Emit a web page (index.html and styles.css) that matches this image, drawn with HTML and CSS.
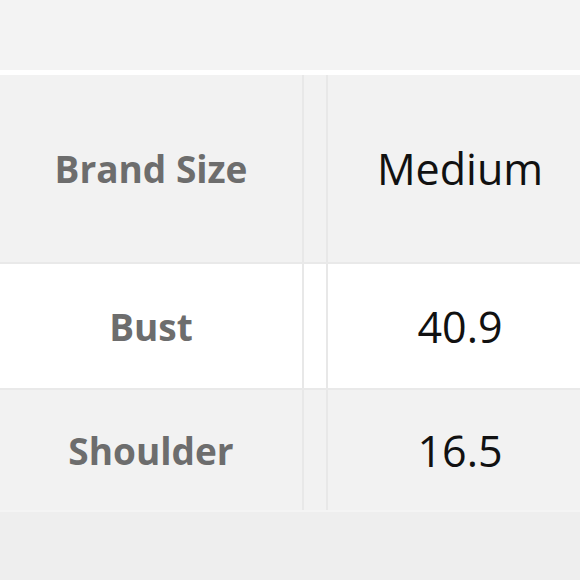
FILE: index.html
```html
<!DOCTYPE html>
<html>
<head>
<meta charset="utf-8">
<link rel="stylesheet" href="styles.css">
</head>
<body>
<div class="page">
  <div class="top"></div>
  <div class="divider"></div>
  <div class="table">
    <div class="row head">
      <div class="cell label">Brand Size</div>
      <div class="cell gap"></div>
      <div class="cell value">Medium</div>
    </div>
    <div class="row alt">
      <div class="cell label">Bust</div>
      <div class="cell gap"></div>
      <div class="cell value">40.9</div>
    </div>
    <div class="row last">
      <div class="cell label">Shoulder</div>
      <div class="cell gap"></div>
      <div class="cell value">16.5</div>
    </div>
  </div>
  <div class="bottom"></div>
</div>
</body>
</html>
```
FILE: styles.css
```css
html, body {
  margin: 0;
  padding: 0;
  background: #f2f2f2;
}
.page {
  width: 580px;
  height: 580px;
  overflow: hidden;
  font-family: "Open Sans", "Noto Sans", sans-serif;
}
.top {
  height: 70px;
  background: #f3f3f3;
}
.divider {
  height: 5px;
  background: #ffffff;
}
.table {
  width: 592px;
}
.row {
  display: grid;
  grid-template-columns: 304px 24px 1fr;
  background: #f2f2f2;
}
.row.head { height: 187px; }
.row.alt {
  height: 126px;
  background: #ffffff;
  border-top: 2px solid #e9e9e9;
  box-sizing: border-box;
}
.row.last {
  height: 122px;
  border-top: 2px solid #e9e9e9;
  box-sizing: border-box;
}
.cell {
  display: flex;
  align-items: center;
  justify-content: center;
}
.label {
  border-right: 2px solid #e8e8e8;
  font-weight: 700;
  font-size: 37px;
  color: #6d6d6d;
}
.gap {
  border-right: 2px solid #e8e8e8;
}
.value {
  font-size: 43px;
  color: #111111;
}
.bottom {
  height: 70px;
  background: #eeeeee;
  border-top: 2px solid #f4f4f4;
}
```
